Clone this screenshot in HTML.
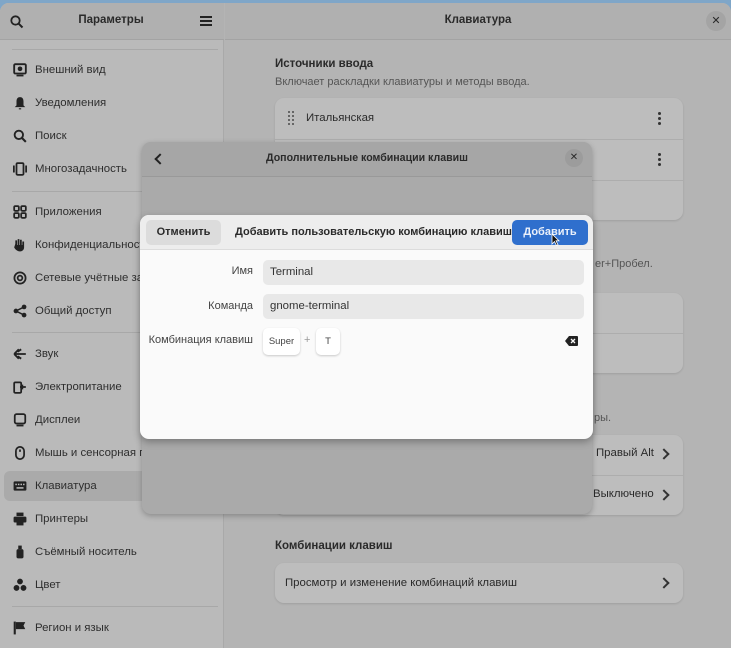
<!DOCTYPE html>
<html><head><meta charset="utf-8"><style>
*{box-sizing:border-box;margin:0;padding:0}
body{width:731px;height:648px;overflow:hidden;background:#7fa6c8;font-family:"Liberation Sans","DejaVu Sans",sans-serif;font-size:11.4px;color:#2a2a2a;position:relative}
.abs{position:absolute}
#win{position:absolute;left:0;top:3px;width:731px;height:645px;background:#b4b4b4;border-radius:9px 9px 0 0;overflow:hidden}
#side{position:absolute;left:0;top:0;width:224px;height:645px;background:#bababa;border-right:1px solid #a9a9a9}
.hb{position:absolute;top:0;height:37px;background:#b0b0b0;border-bottom:1px solid #a3a3a3}
.it{position:absolute;left:14px;height:20px;line-height:20px;color:#2e2e2e;white-space:nowrap}
.it span{position:absolute;left:21px;top:0}
.ic{position:absolute;left:-1px;top:3px;width:14px;height:14px}
.sep{position:absolute;left:12px;width:206px;height:1px;background:#a8a8a8}
.card{position:absolute;background:#bdbdbd;border-radius:9px;box-shadow:0 1px 2px rgba(0,0,0,.12)}
.row{position:absolute;left:0;right:0;border-top:1px solid #adadad}
.chev{position:absolute;width:8px;height:8px;border-right:2px solid #333;border-top:2px solid #333;transform:rotate(45deg)}
.dots{position:absolute;width:3px;height:3px;background:#333;border-radius:50%;box-shadow:0 -5px 0 #333,0 5px 0 #333}
.entry{position:absolute;left:263px;width:321px;height:25px;background:#e8e8e8;border-radius:5px;padding-left:7px;line-height:25px;color:#333}
.lbl{position:absolute;color:#444;text-align:right;white-space:nowrap;font-size:11px}
.key{position:absolute;height:27px;background:#fff;border-radius:5px;box-shadow:0 1px 2px rgba(0,0,0,.2);line-height:27px;text-align:center;font-size:9.5px;color:#444}
</style></head><body>
<div id="win">
 <div id="side">
  <div class="hb" style="left:0;width:224px"></div>
  <svg class="abs" style="left:10px;top:12px" width="14" height="14" viewBox="0 0 14 14"><circle cx="5.5" cy="5.5" r="4.2" fill="none" stroke="#222" stroke-width="1.8"/><path d="M8.6 8.6L12.5 12.5" stroke="#222" stroke-width="2"/></svg>
  <div class="abs" style="left:60px;top:11px;width:102px;text-align:center;font-weight:bold;font-size:11.5px;color:#2a2a2a">Параметры</div>
  <div class="abs" style="left:200px;top:13px;width:12px;height:2px;background:#222;box-shadow:0 4px 0 #222,0 8px 0 #222"></div>
  <div class="sep" style="top:46px"></div>
  <div class="it" style="top:57px"><svg class="ic" viewBox="0 0 12 12"><rect x="1" y="1" width="10" height="8" rx="1" fill="none" stroke="#222" stroke-width="1.6"/><rect x="3" y="10" width="6" height="1.5" fill="#222"/><circle cx="6" cy="5" r="2" fill="#222"/></svg><span>Внешний вид</span></div>
  <div class="it" style="top:90px"><svg class="ic" viewBox="0 0 12 12"><path d="M6 1C3.5 1 3 3 3 5v3L1.5 9.5h9L9 8V5C9 3 8.5 1 6 1z M5 10.5h2v1H5z" fill="#222"/></svg><span>Уведомления</span></div>
  <div class="it" style="top:123px"><svg class="ic" viewBox="0 0 12 12"><circle cx="5" cy="5" r="3.6" fill="none" stroke="#222" stroke-width="1.6"/><path d="M7.6 7.6L11 11" stroke="#222" stroke-width="1.8"/></svg><span>Поиск</span></div>
  <div class="it" style="top:156px"><svg class="ic" viewBox="0 0 12 12"><rect x="3" y="1" width="6" height="10" rx="1" fill="none" stroke="#222" stroke-width="1.5"/><rect x="0" y="3" width="1.5" height="6" fill="#222"/><rect x="10.5" y="3" width="1.5" height="6" fill="#222"/></svg><span>Многозадачность</span></div>
  <div class="sep" style="top:188px"></div>
  <div class="it" style="top:199px"><svg class="ic" viewBox="0 0 12 12"><g fill="none" stroke="#222" stroke-width="1.5"><rect x="1" y="1" width="4" height="4" rx="1"/><rect x="7" y="1" width="4" height="4" rx="1"/><rect x="1" y="7" width="4" height="4" rx="1"/><rect x="7" y="7" width="4" height="4" rx="1"/></g></svg><span>Приложения</span></div>
  <div class="it" style="top:232px"><svg class="ic" viewBox="0 0 12 12"><path d="M2 5V2h1.5v4h.5V1h1.5v5h.5V1.5h1.5V6h.5V3h1.5v5c0 2-1.5 3.5-3.5 3.5S2 10 1 8z" fill="#222"/></svg><span>Конфиденциальность</span></div>
  <div class="it" style="top:265px"><svg class="ic" viewBox="0 0 12 12"><circle cx="6" cy="6" r="4.8" fill="none" stroke="#222" stroke-width="1.5"/><circle cx="6" cy="6" r="2" fill="none" stroke="#222" stroke-width="1.5"/></svg><span>Сетевые учётные записи</span></div>
  <div class="it" style="top:298px"><svg class="ic" viewBox="0 0 12 12"><circle cx="2.5" cy="6" r="2" fill="#222"/><circle cx="9.5" cy="2.5" r="2" fill="#222"/><circle cx="9.5" cy="9.5" r="2" fill="#222"/><path d="M2.5 6L9.5 2.5M2.5 6l7 3.5" stroke="#222" stroke-width="1.3"/></svg><span>Общий доступ</span></div>
  <div class="sep" style="top:329px"></div>
  <div class="it" style="top:341px"><svg class="ic" viewBox="0 0 12 12"><path d="M1 6l4-4M1 6l4 4M1 6h10M4 4l3-2M4 8l3 2" stroke="#222" stroke-width="1.6" fill="none"/></svg><span>Звук</span></div>
  <div class="it" style="top:374px"><svg class="ic" viewBox="0 0 12 12"><rect x="1" y="2" width="6" height="9" rx="1" fill="none" stroke="#222" stroke-width="1.5"/><path d="M6 6h5M8 4v4" stroke="#222" stroke-width="1.5"/></svg><span>Электропитание</span></div>
  <div class="it" style="top:407px"><svg class="ic" viewBox="0 0 12 12"><rect x="1.5" y="1" width="9" height="8" rx="1.5" fill="none" stroke="#222" stroke-width="1.5"/><rect x="3" y="10" width="6" height="1.5" fill="#222"/></svg><span>Дисплеи</span></div>
  <div class="it" style="top:440px"><svg class="ic" viewBox="0 0 12 12"><rect x="2.5" y="0.8" width="7" height="10.4" rx="3.5" fill="none" stroke="#222" stroke-width="1.5"/><path d="M6 3v2" stroke="#222" stroke-width="1.5"/></svg><span>Мышь и сенсорная панель</span></div>
  <div class="abs" style="left:4px;top:468px;width:220px;height:30px;background:#aaaaaa;border-radius:6px"></div>
  <div class="it" style="top:473px"><svg class="ic" viewBox="0 0 12 12"><rect x="0.5" y="2" width="11" height="8" rx="1" fill="#222"/><g fill="#bbb"><rect x="2" y="4" width="1.3" height="1.3"/><rect x="4.2" y="4" width="1.3" height="1.3"/><rect x="6.4" y="4" width="1.3" height="1.3"/><rect x="8.6" y="4" width="1.3" height="1.3"/><rect x="3" y="7" width="6" height="1.3"/></g></svg><span>Клавиатура</span></div>
  <div class="it" style="top:506px"><svg class="ic" viewBox="0 0 12 12"><rect x="3" y="0.5" width="6" height="3" fill="#222"/><rect x="0.5" y="4" width="11" height="5" rx="1" fill="#222"/><rect x="3" y="8" width="6" height="3.5" fill="#222"/></svg><span>Принтеры</span></div>
  <div class="it" style="top:539px"><svg class="ic" viewBox="0 0 12 12"><rect x="4.5" y="0.5" width="3" height="3" fill="#222"/><rect x="3" y="3.5" width="6" height="8" rx="1.5" fill="#222"/></svg><span>Съёмный носитель</span></div>
  <div class="it" style="top:572px"><svg class="ic" viewBox="0 0 12 12"><circle cx="6" cy="3" r="2.5" fill="#222"/><circle cx="3" cy="8.5" r="2.5" fill="#222"/><circle cx="9" cy="8.5" r="2.5" fill="#222"/></svg><span>Цвет</span></div>
  <div class="sep" style="top:603px"></div>
  <div class="it" style="top:615px"><svg class="ic" viewBox="0 0 12 12"><path d="M1.5 0.5v11" stroke="#222" stroke-width="1.8"/><path d="M2.5 1h8l-1.5 3 1.5 3h-8z" fill="#222"/></svg><span>Регион и язык</span></div>
 </div>
 <div class="hb" style="left:225px;width:506px"></div>
 <div class="abs" style="left:420px;top:11px;width:116px;text-align:center;font-weight:bold;font-size:11.5px">Клавиатура</div>
 <div class="abs" style="left:706px;top:8px;width:20px;height:20px;border-radius:50%;background:#a4a4a4;text-align:center;line-height:20px;font-weight:bold;font-size:11px">✕</div>
 <div class="abs" style="left:275px;top:55px;font-weight:bold;font-size:11.5px">Источники ввода</div>
 <div class="abs" style="left:275px;top:73px;color:#555;font-size:11px">Включает раскладки клавиатуры и методы ввода.</div>
 <div class="card" style="left:275px;top:95px;width:408px;height:122px">
  <div class="abs" style="left:13px;top:13px;width:2px;height:2px;background:#666;box-shadow:4px 0 0 #666,0 4px 0 #666,4px 4px 0 #666,0 8px 0 #666,4px 8px 0 #666,0 12px 0 #666,4px 12px 0 #666"></div>
  <div class="abs" style="left:31px;top:14px">Итальянская</div>
  <div class="dots" style="left:383px;top:19px"></div>
  <div class="row" style="top:41px"></div>
  <div class="dots" style="left:383px;top:60px"></div>
  <div class="row" style="top:82px"></div>
 </div>
 <div class="abs" style="left:595px;top:255px;color:#555;font-size:11px">er+Пробел.</div>
 <div class="card" style="left:275px;top:290px;width:408px;height:80px"><div class="row" style="top:40px"></div></div>
 <div class="abs" style="left:594px;top:409px;color:#555;font-size:11px">ры.</div>
 <div class="card" style="left:275px;top:432px;width:408px;height:80px">
  <div class="abs" style="left:321px;top:12px">Правый Alt</div><div class="chev" style="left:385px;top:15px"></div>
  <div class="row" style="top:40px"></div>
  <div class="abs" style="left:318px;top:53px">Выключено</div><div class="chev" style="left:385px;top:56px"></div>
 </div>
 <div class="abs" style="left:275px;top:537px;font-weight:bold;font-size:11.5px">Комбинации клавиш</div>
 <div class="card" style="left:275px;top:560px;width:408px;height:40px">
  <div class="abs" style="left:10px;top:14px">Просмотр и изменение комбинаций клавиш</div><div class="chev" style="left:385px;top:16px"></div>
 </div>
</div>
<div class="abs" style="left:142px;top:142px;width:450px;height:372px;background:#aaaaaa;border-radius:9px;box-shadow:0 2px 6px rgba(0,0,0,.25);overflow:hidden">
 <div class="abs" style="left:0;top:0;width:450px;height:35px;background:#a6a6a6;border-bottom:1px solid #999"></div>
 <div class="abs" style="left:14px;top:13px;width:8px;height:8px;border-left:2px solid #222;border-bottom:2px solid #222;transform:rotate(45deg)"></div>
 <div class="abs" style="left:0;top:10px;width:450px;text-align:center;font-weight:bold;font-size:10.6px">Дополнительные комбинации клавиш</div>
 <div class="abs" style="left:423px;top:7px;width:18px;height:18px;border-radius:50%;background:#9c9c9c;text-align:center;line-height:18px;font-weight:bold;font-size:10px">✕</div>
</div>
<div class="abs" style="left:140px;top:215px;width:453px;height:224px;background:#fafafa;border-radius:9px;box-shadow:0 3px 8px rgba(0,0,0,.3);overflow:hidden">
 <div class="abs" style="left:0;top:0;width:453px;height:35px;background:#ededed;border-bottom:1px solid #dcdcdc"></div>
 <div class="abs" style="left:6px;top:5px;width:75px;height:25px;background:#dcdcdc;border-radius:5px;text-align:center;line-height:25px;font-weight:bold;font-size:11px">Отменить</div>
 <div class="abs" style="left:95px;top:11px;font-weight:bold;white-space:nowrap;font-size:11px">Добавить пользовательскую комбинацию клавиш</div>
 <div class="abs" style="left:372px;top:5px;width:76px;height:25px;background:#2f6fcd;border-radius:5px;text-align:center;line-height:25px;font-weight:bold;color:#eaf0fa;font-size:11px">Добавить</div>
 <svg class="abs" style="left:411px;top:18px" width="10" height="14" viewBox="0 0 10 14"><path d="M1 1v10l2.5-2.5 2 4 1.5-.7-2-4H8z" fill="#111" stroke="#fff" stroke-width=".8"/></svg>
</div>
<div class="lbl" style="right:478px;top:265px">Имя</div>
<div class="entry" style="top:260px">Terminal</div>
<div class="lbl" style="right:478px;top:300px">Команда</div>
<div class="entry" style="top:294px">gnome-terminal</div>
<div class="lbl" style="right:478px;top:334px">Комбинация клавиш</div>
<div class="key" style="left:263px;top:328px;width:37px">Super</div>
<div class="abs" style="left:304px;top:334px;color:#999;font-size:11px">+</div>
<div class="key" style="left:316px;top:328px;width:24px">T</div>
<svg class="abs" style="left:565px;top:336px" width="13" height="10" viewBox="0 0 13 10"><path d="M4 0h8a1 1 0 0 1 1 1v8a1 1 0 0 1-1 1H4L0 5z" fill="#222"/><path d="M6 3l4 4M10 3l-4 4" stroke="#fafafa" stroke-width="1.3"/></svg>
</body></html>
